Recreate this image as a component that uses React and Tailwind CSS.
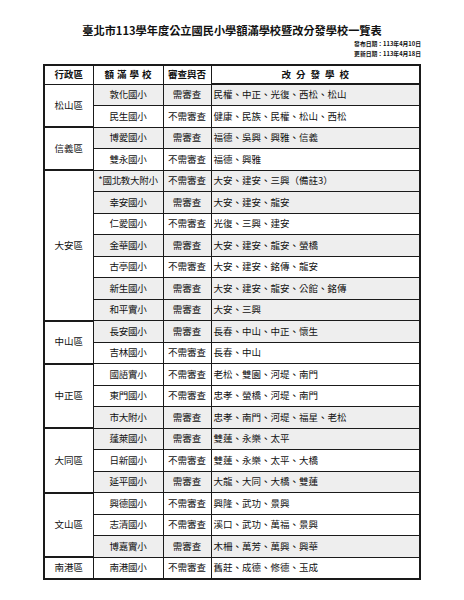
import React from "react";

const groups = [
  { d: "松山區", rows: [
    ["敦化國小", "需審查", "民權、中正、光復、西松、松山", true],
    ["民生國小", "不需審查", "健康、民族、民權、松山、西松", false],
  ]},
  { d: "信義區", rows: [
    ["博愛國小", "需審查", "福德、吳興、興雅、信義", true],
    ["雙永國小", "不需審查", "福德、興雅", false],
  ]},
  { d: "大安區", rows: [
    ["*國北教大附小", "不需審查", "大安、建安、三興（備註3）", true],
    ["幸安國小", "需審查", "大安、建安、龍安", true],
    ["仁愛國小", "不需審查", "光復、三興、建安", false],
    ["金華國小", "需審查", "大安、建安、龍安、螢橋", true],
    ["古亭國小", "不需審查", "大安、建安、銘傳、龍安", false],
    ["新生國小", "需審查", "大安、建安、龍安、公館、銘傳", true],
    ["和平實小", "需審查", "大安、三興", true],
  ]},
  { d: "中山區", rows: [
    ["長安國小", "需審查", "長春、中山、中正、懷生", true],
    ["吉林國小", "不需審查", "長春、中山", false],
  ]},
  { d: "中正區", rows: [
    ["國語實小", "不需審查", "老松、雙園、河堤、南門", false],
    ["東門國小", "不需審查", "忠孝、螢橋、河堤、南門", false],
    ["市大附小", "需審查", "忠孝、南門、河堤、福星、老松", true],
  ]},
  { d: "大同區", rows: [
    ["蓬萊國小", "需審查", "雙蓮、永樂、太平", true],
    ["日新國小", "不需審查", "雙蓮、永樂、太平、大橋", false],
    ["延平國小", "需審查", "大龍、大同、大橋、雙蓮", true],
  ]},
  { d: "文山區", rows: [
    ["興德國小", "不需審查", "興隆、武功、景興", false],
    ["志清國小", "不需審查", "溪口、武功、萬福、景興", false],
    ["博嘉實小", "需審查", "木柵、萬芳、萬興、興華", true],
  ]},
  { d: "南港區", rows: [
    ["南港國小", "不需審查", "舊莊、成德、修德、玉成", false],
  ]},
];

export default function App() {
  return (
    <div
      className="w-[464px] h-[600px] bg-white text-[#111] flex flex-col items-center pt-[23px]"
      style={{ fontFamily: '"Noto Sans CJK TC", "Noto Sans CJK SC", sans-serif' }}
    >
      <div className="h-[14px] leading-[14px] text-[11.2px] font-bold whitespace-nowrap">
        臺北市113學年度公立國民小學額滿學校暨改分發學校一覽表
      </div>
      <div className="w-[378px] mt-[2px] flex flex-col items-end text-[5.8px] font-bold">
        <div className="h-[10px] leading-[10px]">發布日期：113年4月10日</div>
        <div className="h-[10px] leading-[10px]">更新日期：113年4月18日</div>
      </div>
      <table className="mt-[5px] w-[378px] table-fixed border-collapse border-2 border-[#1a1a1a] text-[9.5px] leading-none">
        <colgroup>
          <col className="w-[49px]" />
          <col className="w-[70px]" />
          <col className="w-[48px]" />
          <col />
        </colgroup>
        <thead>
          <tr className="h-[19px] font-bold">
            <th className="border border-[#1a1a1a] p-0 font-bold">行政區</th>
            <th className="border border-[#1a1a1a] p-0 pl-[3px] font-bold tracking-[3px]">額滿學校</th>
            <th className="border border-[#1a1a1a] p-0 font-bold">審查與否</th>
            <th className="border border-[#1a1a1a] border-b-2 p-0 pl-[5px] font-bold tracking-[5px]">改分發學校</th>
          </tr>
        </thead>
        <tbody>
          {groups.map((g) =>
            g.rows.map((r, i) => (
              <tr key={g.d + i} className="h-[21.5px]">
                {i === 0 && (
                  <td
                    rowSpan={g.rows.length}
                    className="border border-[#1a1a1a] border-b-2 p-0 text-center align-middle bg-white"
                  >
                    {g.d}
                  </td>
                )}
                <td className={`border border-[#1a1a1a] p-0 text-center whitespace-nowrap tracking-[-0.3px] ${r[3] ? "bg-[#eeeeee]" : "bg-white"}`}>
                  {r[0]}
                </td>
                <td className={`border border-[#1a1a1a] p-0 text-center whitespace-nowrap ${r[3] ? "bg-[#eeeeee]" : "bg-white"}`}>
                  {r[1]}
                </td>
                <td className={`border border-[#1a1a1a] py-0 pl-[2px] text-left whitespace-nowrap ${r[3] ? "bg-[#eeeeee]" : "bg-white"}`}>
                  {r[2]}
                </td>
              </tr>
            ))
          )}
        </tbody>
      </table>
    </div>
  );
}
